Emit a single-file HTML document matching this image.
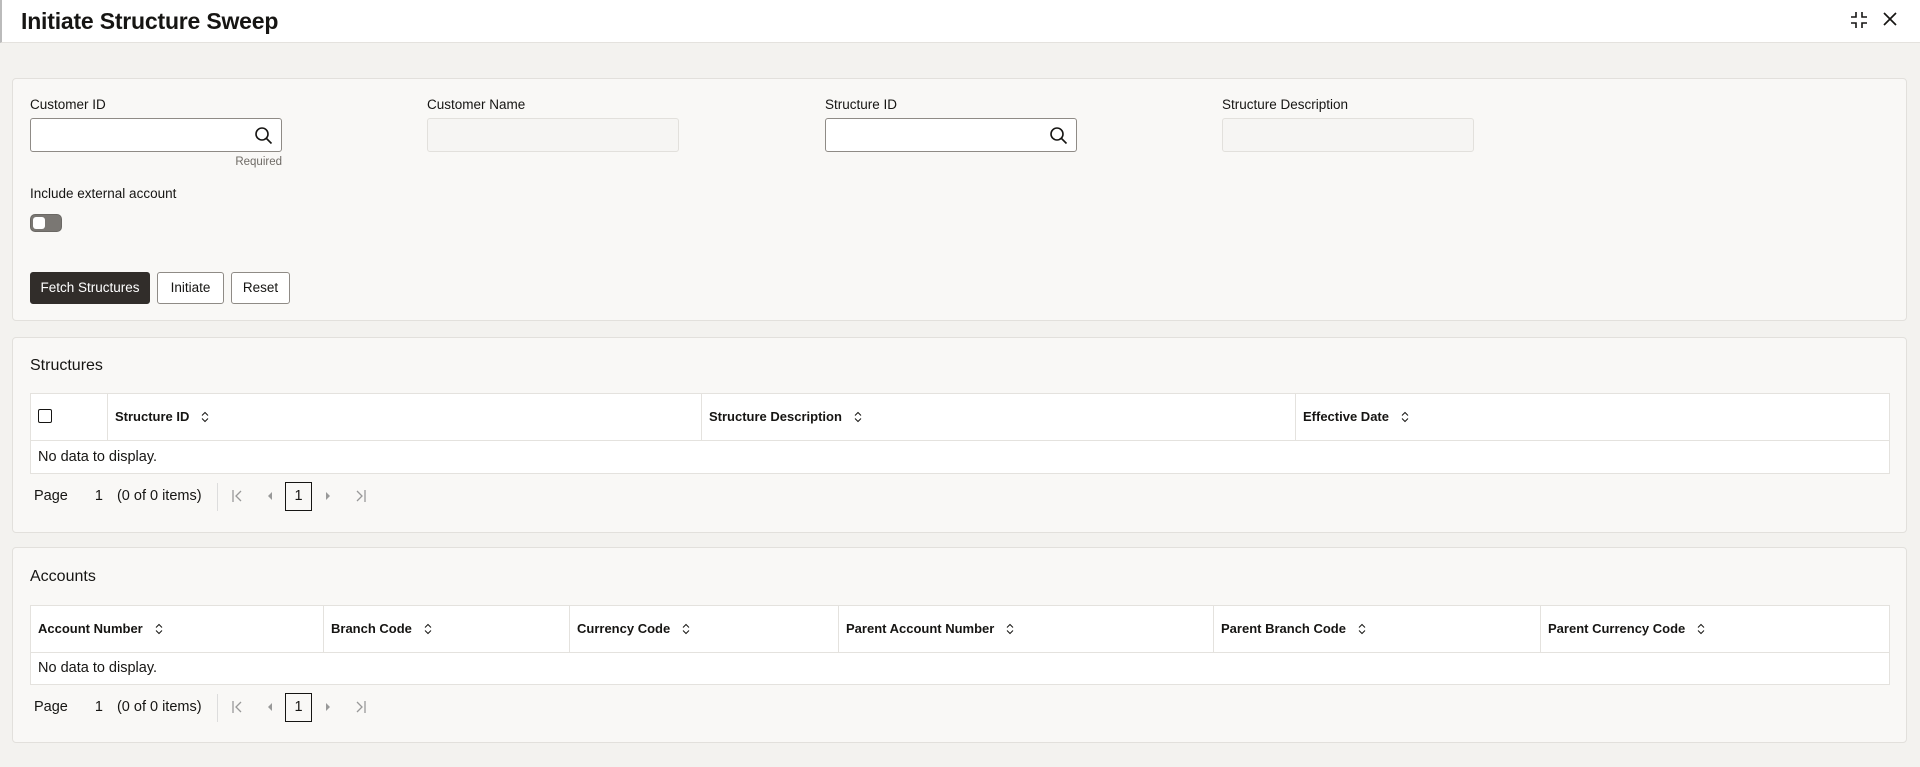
<!DOCTYPE html>
<html><head><meta charset="utf-8"><style>
*{box-sizing:border-box;margin:0;padding:0}
body{width:1920px;height:767px;overflow:hidden;background:#f3f2ef;font-family:"Liberation Sans Narrow","Liberation Sans",sans-serif;color:#161513;position:relative;font-size:13px}
.hdr{position:absolute;left:0;top:0;width:1920px;height:43px;background:#fff;border-bottom:1px solid #e4e2de;border-left:2px solid #bbb}
.hdr h1{position:absolute;left:19px;top:8px;font-size:23px;font-weight:bold;letter-spacing:-0.2px}
.panel{position:absolute;left:12px;width:1895px;background:#f9f8f6;border:1px solid #e2e0dc;border-radius:4px}
.lbl{position:absolute;font-size:13.5px}
.inp{position:absolute;width:252px;height:34px;border:1px solid #8f8b86;border-radius:3px;background:#fff}
.inp.ro{border-color:#e2e0dc;background:#f6f5f3}
.btn{position:absolute;top:272px;height:32px;border:1px solid #8f8b86;border-radius:3px;background:#fff;font-size:13.5px;text-align:center;line-height:30px}
.tbl{position:absolute;left:30px;width:1860px;background:#fff;border:1px solid #e4e2de}
.th{position:absolute;top:0;height:46px;border-right:1px solid #e4e2de;font-size:13px;font-weight:bold;line-height:46px;padding-left:7px}
.sort{display:inline-block;margin-left:12px;vertical-align:-2px}
.nd{position:absolute;left:7px;top:55px;font-size:14.5px}
.pg{position:absolute;left:34px;font-size:14.5px;color:#161513}
.pgbox{position:absolute;width:27px;height:29px;border:1px solid #161513;text-align:center;line-height:27px;font-size:14.5px}
.ti{position:absolute;font-size:16px;left:30px}
.ar{position:absolute}
</style></head><body>
<div class="hdr"><h1>Initiate Structure Sweep</h1>
<svg style="position:absolute;left:1846px;top:9px" width="22" height="22" viewBox="0 0 22 22" fill="none" stroke="#161513" stroke-width="1.6"><path d="M8 3v5H3M14 3v5h5M8 19v-5H3M14 19v-5h5"/></svg>
<svg style="position:absolute;left:1881px;top:12px" width="14" height="14" viewBox="0 0 14 14" stroke="#161513" stroke-width="1.7"><path d="M1 1l12 12M13 1L1 13"/></svg>
</div>

<div class="panel" style="top:78px;height:243px"></div>
<div class="lbl" style="left:30px;top:97px">Customer ID</div>
<div class="inp" style="left:30px;top:118px"><svg style="position:absolute;right:8px;top:7px" width="19" height="19" viewBox="0 0 19 19" fill="none" stroke="#161513" stroke-width="1.6"><circle cx="8" cy="8" r="6"/><path d="M12.5 12.5l5 5"/></svg></div>
<div style="position:absolute;left:200px;width:82px;text-align:right;top:156px;font-size:11.5px;color:#6f6b66">Required</div>
<div class="lbl" style="left:427px;top:97px">Customer Name</div>
<div class="inp ro" style="left:427px;top:118px"></div>
<div class="lbl" style="left:825px;top:97px">Structure ID</div>
<div class="inp" style="left:825px;top:118px"><svg style="position:absolute;right:8px;top:7px" width="19" height="19" viewBox="0 0 19 19" fill="none" stroke="#161513" stroke-width="1.6"><circle cx="8" cy="8" r="6"/><path d="M12.5 12.5l5 5"/></svg></div>
<div class="lbl" style="left:1222px;top:97px">Structure Description</div>
<div class="inp ro" style="left:1222px;top:118px"></div>
<div class="lbl" style="left:30px;top:186px">Include external account</div>
<div style="position:absolute;left:30px;top:214px;width:32px;height:18px;border-radius:5px;background:#7a7773;border:1px solid #6b6864"><div style="position:absolute;left:2px;top:2px;width:12px;height:12px;background:#fff;border-radius:3px"></div></div>
<div class="btn" style="left:30px;width:120px;background:#312d2a;border-color:#312d2a;color:#fff">Fetch Structures</div>
<div class="btn" style="left:157px;width:67px">Initiate</div>
<div class="btn" style="left:231px;width:59px">Reset</div>

<div class="panel" style="top:337px;height:196px"></div>
<div class="ti" style="top:357px">Structures</div>
<div class="tbl" style="top:393px;height:81px">
<div class="th" style="left:0;width:77px"><span style="display:inline-block;width:14px;height:14px;border:1.5px solid #161513;border-radius:2px;vertical-align:-2px"></span></div>
<div class="th" style="left:77px;width:594px">Structure ID<svg class="sort" width="8" height="12" viewBox="0 0 8 12" fill="none" stroke="#161513"><path d="M1 4.5L4 1.5 7 4.5M1 7.5L4 10.5 7 7.5"/></svg></div>
<div class="th" style="left:671px;width:594px">Structure Description<svg class="sort" width="8" height="12" viewBox="0 0 8 12" fill="none" stroke="#161513"><path d="M1 4.5L4 1.5 7 4.5M1 7.5L4 10.5 7 7.5"/></svg></div>
<div class="th" style="left:1265px;width:594px;border-right:0">Effective Date<svg class="sort" width="8" height="12" viewBox="0 0 8 12" fill="none" stroke="#161513"><path d="M1 4.5L4 1.5 7 4.5M1 7.5L4 10.5 7 7.5"/></svg></div>
<div style="position:absolute;left:0;right:0;top:46px;border-top:1px solid #e4e2de"></div>
<div class="nd">No data to display.</div>
</div>
<div class="pg" style="top:488px">Page<span style="margin-left:27px">1</span><span style="margin-left:14px">(0 of 0 items)</span></div>
<div style="position:absolute;left:217px;top:483px;height:28px;border-left:1px solid #ddd"></div>
<svg class="ar" style="left:231px;top:489px" width="14" height="14" viewBox="0 0 14 14" fill="none" stroke="#999" stroke-width="1.3"><path d="M2 1v12M10 2L5 7l5 5"/></svg>
<svg class="ar" style="left:266px;top:491px" width="8" height="10" viewBox="0 0 8 10"><path d="M6 1L2 5l4 4z" fill="#999"/></svg>
<div class="pgbox" style="left:285px;top:482px">1</div>
<svg class="ar" style="left:324px;top:491px" width="8" height="10" viewBox="0 0 8 10"><path d="M2 1l4 4-4 4z" fill="#999"/></svg>
<svg class="ar" style="left:353px;top:489px" width="14" height="14" viewBox="0 0 14 14" fill="none" stroke="#999" stroke-width="1.3"><path d="M12 1v12M4 2l5 5-5 5"/></svg>

<div class="panel" style="top:547px;height:196px"></div>
<div class="ti" style="top:568px">Accounts</div>
<div class="tbl" style="top:605px;height:80px">
<div class="th" style="left:0;width:293px">Account Number<svg class="sort" width="8" height="12" viewBox="0 0 8 12" fill="none" stroke="#161513"><path d="M1 4.5L4 1.5 7 4.5M1 7.5L4 10.5 7 7.5"/></svg></div>
<div class="th" style="left:293px;width:246px">Branch Code<svg class="sort" width="8" height="12" viewBox="0 0 8 12" fill="none" stroke="#161513"><path d="M1 4.5L4 1.5 7 4.5M1 7.5L4 10.5 7 7.5"/></svg></div>
<div class="th" style="left:539px;width:269px">Currency Code<svg class="sort" width="8" height="12" viewBox="0 0 8 12" fill="none" stroke="#161513"><path d="M1 4.5L4 1.5 7 4.5M1 7.5L4 10.5 7 7.5"/></svg></div>
<div class="th" style="left:808px;width:375px">Parent Account Number<svg class="sort" width="8" height="12" viewBox="0 0 8 12" fill="none" stroke="#161513"><path d="M1 4.5L4 1.5 7 4.5M1 7.5L4 10.5 7 7.5"/></svg></div>
<div class="th" style="left:1183px;width:327px">Parent Branch Code<svg class="sort" width="8" height="12" viewBox="0 0 8 12" fill="none" stroke="#161513"><path d="M1 4.5L4 1.5 7 4.5M1 7.5L4 10.5 7 7.5"/></svg></div>
<div class="th" style="left:1510px;width:349px;border-right:0">Parent Currency Code<svg class="sort" width="8" height="12" viewBox="0 0 8 12" fill="none" stroke="#161513"><path d="M1 4.5L4 1.5 7 4.5M1 7.5L4 10.5 7 7.5"/></svg></div>
<div style="position:absolute;left:0;right:0;top:46px;border-top:1px solid #e4e2de"></div>
<div class="nd" style="top:54px">No data to display.</div>
</div>
<div class="pg" style="top:699px">Page<span style="margin-left:27px">1</span><span style="margin-left:14px">(0 of 0 items)</span></div>
<div style="position:absolute;left:217px;top:694px;height:28px;border-left:1px solid #ddd"></div>
<svg class="ar" style="left:231px;top:700px" width="14" height="14" viewBox="0 0 14 14" fill="none" stroke="#999" stroke-width="1.3"><path d="M2 1v12M10 2L5 7l5 5"/></svg>
<svg class="ar" style="left:266px;top:702px" width="8" height="10" viewBox="0 0 8 10"><path d="M6 1L2 5l4 4z" fill="#999"/></svg>
<div class="pgbox" style="left:285px;top:693px">1</div>
<svg class="ar" style="left:324px;top:702px" width="8" height="10" viewBox="0 0 8 10"><path d="M2 1l4 4-4 4z" fill="#999"/></svg>
<svg class="ar" style="left:353px;top:700px" width="14" height="14" viewBox="0 0 14 14" fill="none" stroke="#999" stroke-width="1.3"><path d="M12 1v12M4 2l5 5-5 5"/></svg>
</body></html>
